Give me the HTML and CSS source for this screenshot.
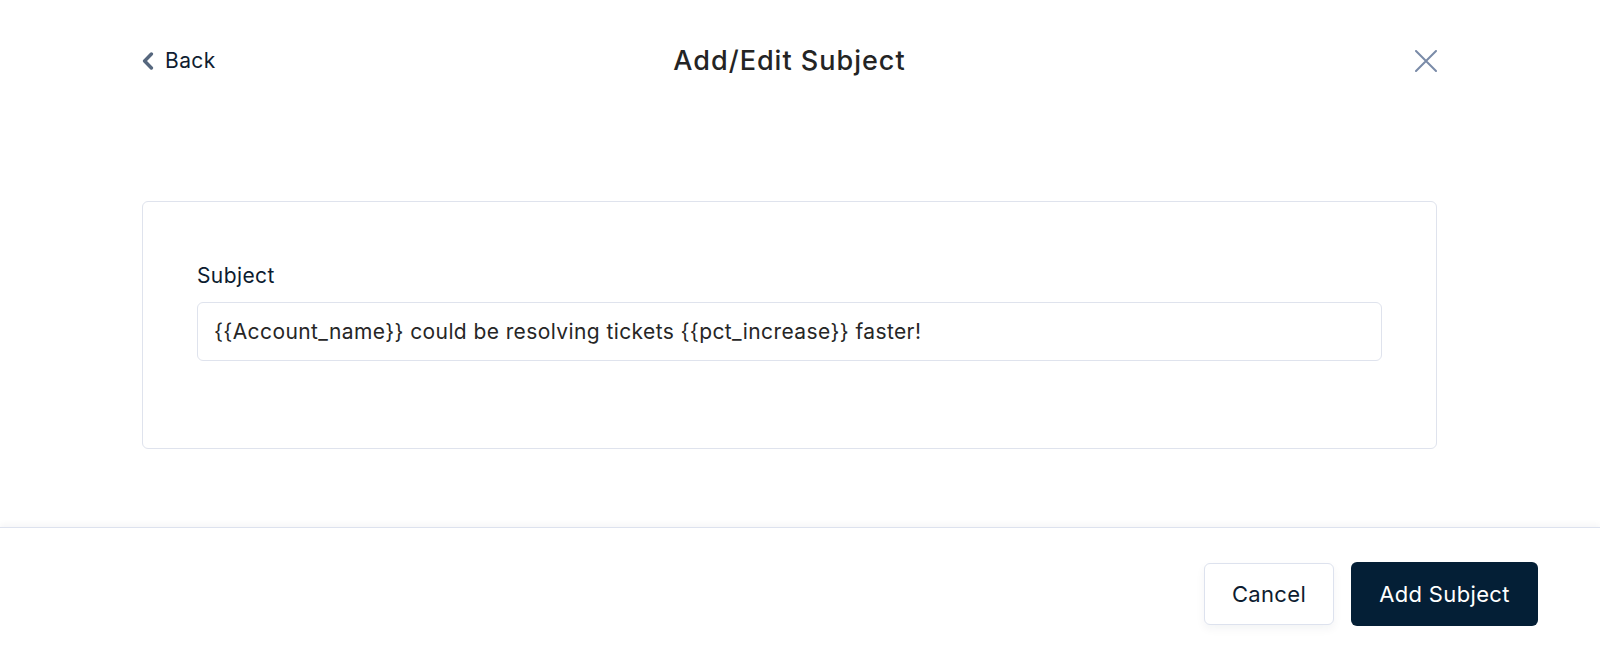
FILE: index.html
```html
<!DOCTYPE html>
<html lang="en">
<head>
<meta charset="utf-8">
<title>Add/Edit Subject</title>
<link rel="stylesheet" href="styles.css">
</head>
<body>
<div class="page">
  <header class="header">
    <a class="back" href="#">
      <svg class="back-icon" width="12" height="18" viewBox="0 0 12 18" aria-hidden="true">
        <polyline points="9.4,2 2.6,9 9.4,16" fill="none" stroke="#56677e" stroke-width="3.4" stroke-linecap="round" stroke-linejoin="round"/>
      </svg>
      <span>Back</span>
    </a>
    <h1 class="title">Add/Edit Subject</h1>
    <button class="close" aria-label="Close">
      <svg width="22" height="22" viewBox="0 0 22 22" aria-hidden="true">
        <path d="M1 1 L21 21 M21 1 L1 21" stroke="#7a8ba8" stroke-width="2" stroke-linecap="round"/>
      </svg>
    </button>
  </header>
  <main class="main">
    <section class="card">
      <label class="label" for="subject">Subject</label>
      <div class="input" id="subject">{{Account_name}} could be resolving tickets {{pct_increase}} faster!</div>
    </section>
  </main>
  <footer class="footer">
    <button class="btn btn-secondary">Cancel</button>
    <button class="btn btn-primary">Add Subject</button>
  </footer>
</div>
</body>
</html>
```

FILE: styles.css
```css
* { box-sizing: border-box; }
html, body { margin: 0; padding: 0; background: #ffffff; }
body {
  font-family: "Inter", "Noto Sans", "Liberation Sans", sans-serif;
  color: #0d1c30;
}
.page {
  width: 1600px;
  height: 655px;
  display: flex;
  flex-direction: column;
}
.header {
  height: 121px;
  padding: 0 163px 0 142px;
  display: grid;
  grid-template-columns: 1fr auto 1fr;
  align-items: center;
}
.back {
  display: inline-flex;
  align-items: center;
  gap: 11px;
  color: #0f1d31;
  text-decoration: none;
  font-size: 21px;
  letter-spacing: 0.4px;
  justify-self: start;
}
.back-icon { display: block; }
.title {
  margin: 0;
  font-size: 27px;
  font-weight: 450;
  letter-spacing: 1px;
  color: #242424;
}
.close {
  justify-self: end;
  background: none;
  border: 0;
  padding: 0;
  width: 22px;
  height: 22px;
  display: flex;
  cursor: pointer;
}
.main {
  flex: 1;
  padding: 80px 163px 0 142px;
}
.card {
  border: 1px solid #dfe3ed;
  border-radius: 6px;
  padding: 62px 54px 87px 54px;
  display: flex;
  flex-direction: column;
}
.label {
  font-size: 21px;
  letter-spacing: 0.4px;
  line-height: 24px;
  color: #0c1b2f;
  margin-bottom: 14px;
}
.input {
  height: 59px;
  border: 1px solid #dfe3ed;
  border-radius: 6px;
  padding: 0 16px;
  display: flex;
  align-items: center;
  font-size: 21px;
  letter-spacing: 0.4px;
  color: #262626;
}
.footer {
  height: 128px;
  border-top: 1px solid #dde2ee;
  box-shadow: 0 -3px 6px rgba(20, 30, 60, 0.04);
  padding: 34px 62px 0 0;
  display: flex;
  justify-content: flex-end;
  align-items: flex-start;
  gap: 17px;
}
.btn {
  font-family: inherit;
  font-size: 22px;
  letter-spacing: 0.35px;
  border-radius: 6px;
  cursor: pointer;
}
.btn-secondary {
  width: 130px;
  height: 62px;
  margin-top: 1px;
  background: #ffffff;
  border: 1px solid #dde2ee;
  color: #0d1c30;
  box-shadow: 0 4px 10px rgba(20, 30, 60, 0.05);
}
.btn-primary {
  width: 187px;
  height: 64px;
  background: #041f36;
  border: 0;
  color: #ffffff;
}
```
